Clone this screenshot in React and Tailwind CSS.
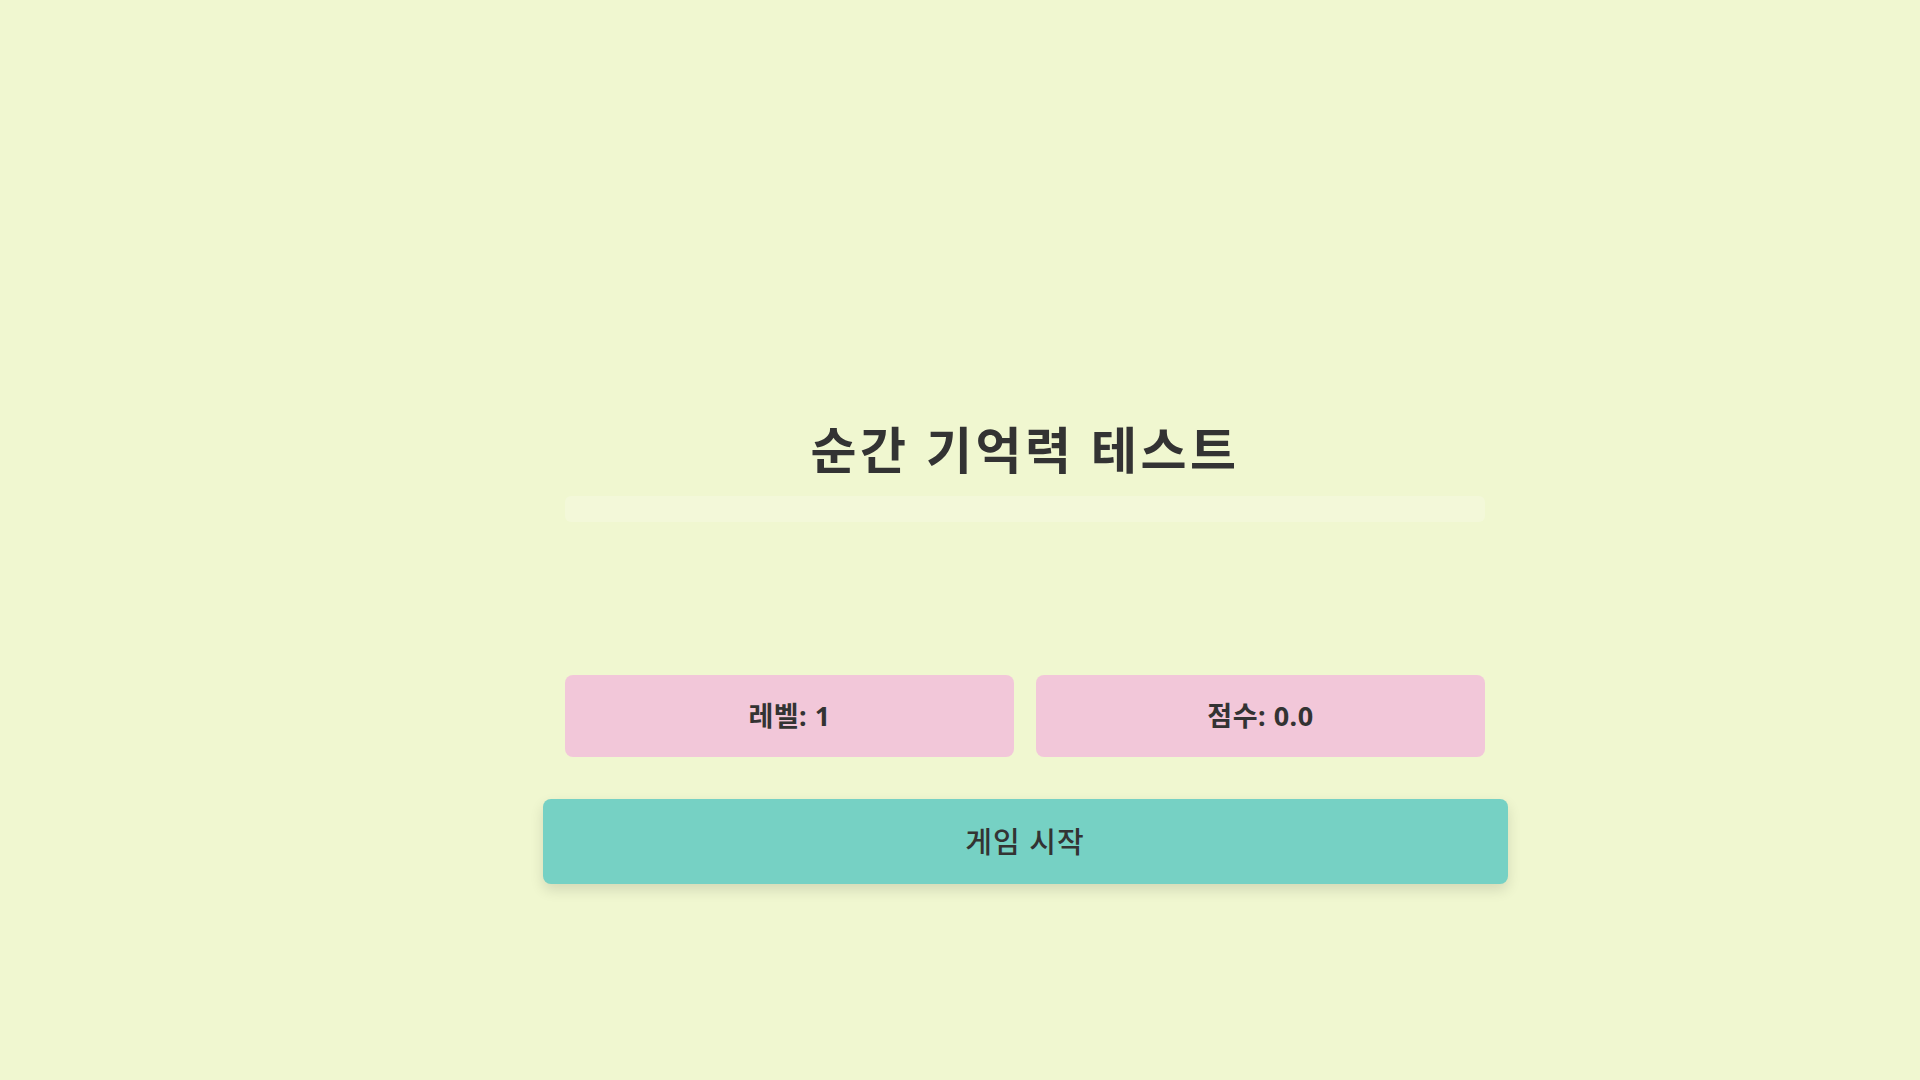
import React from 'react';

function StatBox({ children }) {
  return (
    <div className="flex-1 h-[82px] rounded-lg bg-[#f2c7d9] flex items-center justify-center text-[27px] font-bold text-[#333] tracking-[0.5px]">
      {children}
    </div>
  );
}

export default function App() {
  return (
    <div
      className="min-h-screen w-full bg-[#f0f7d0] pl-[130px]"
      style={{ fontFamily: '"Noto Sans", "Noto Sans CJK KR", sans-serif' }}
    >
      <div className="mx-auto w-[965px] pt-[418px] flex flex-col items-center">
        {/* Title */}
        <h1 className="text-[50px] leading-[64px] font-bold text-[#333] tracking-[3.5px]">
          순간 기억력 테스트
        </h1>

        {/* Progress bar */}
        <div className="mt-[14px] w-[920px] h-[26px] rounded-md bg-white/20" />

        {/* Board area (empty before start) */}
        <div className="h-[153px]" />

        {/* Stats */}
        <div className="w-[920px] flex gap-[22px]">
          <StatBox>레벨: 1</StatBox>
          <StatBox>점수: 0.0</StatBox>
        </div>

        {/* Start button */}
        <button className="mt-[42px] w-[965px] h-[85px] rounded-lg bg-[#76d1c4] text-[29px] font-medium text-[#333] tracking-[1px] shadow-[0_6px_14px_rgba(0,0,0,0.12)]">
          게임 시작
        </button>
      </div>
    </div>
  );
}
